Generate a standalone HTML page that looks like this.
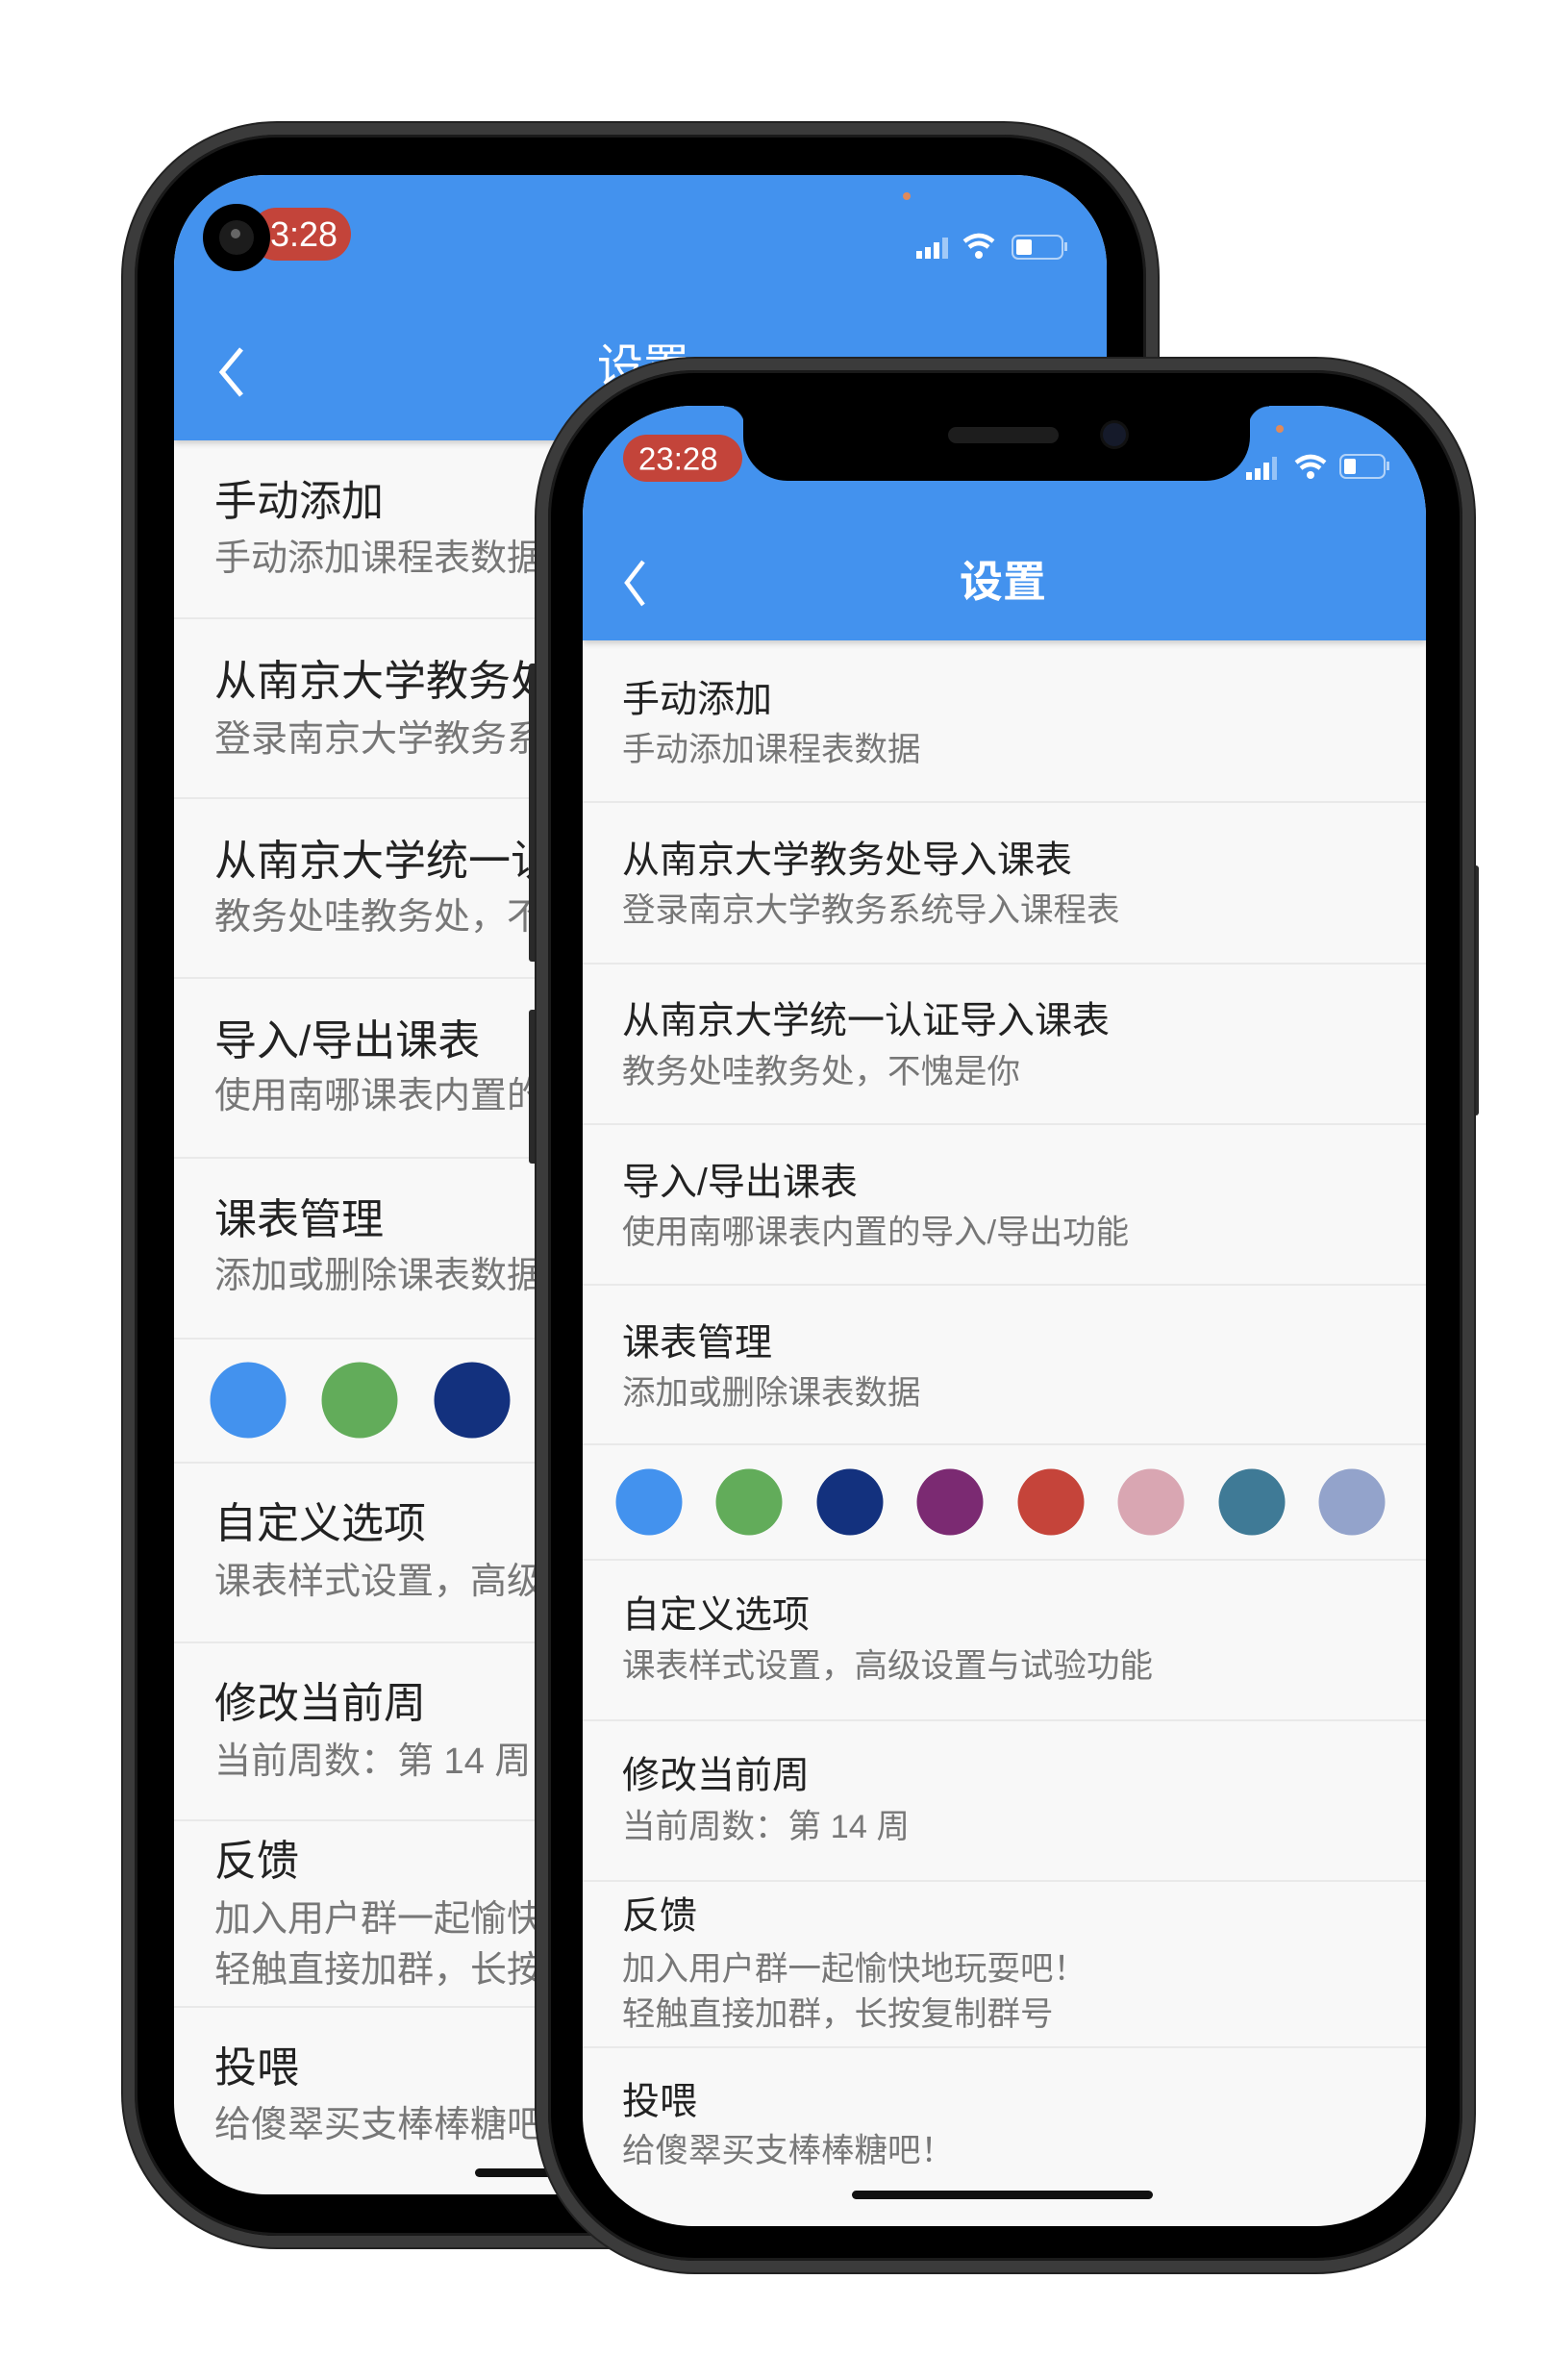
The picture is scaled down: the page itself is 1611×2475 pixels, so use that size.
<!DOCTYPE html>
<html><head><meta charset="utf-8"><style>
*{margin:0;padding:0;box-sizing:border-box}
body{width:1611px;height:2475px;background:#fff;position:relative;overflow:hidden;font-family:"Liberation Sans","Noto Sans CJK SC",sans-serif}
.abs{position:absolute}
.phone{position:absolute;background:#000;border:12px solid #3b3b3b;box-shadow:inset 0 0 0 3px #1a1a1a,0 0 0 2px #222}
.screen{position:absolute;background:#f8f8f8;overflow:hidden}
.hdr{position:absolute;left:0;top:0;width:100%;background:#4392ee;box-shadow:0 3px 6px rgba(0,0,0,.18)}
.t{position:absolute;white-space:nowrap;transform:translateY(-50%);line-height:1}
.sep{position:absolute;left:0;width:100%;height:2px;background:#e9e9e9}
.c{position:absolute;border-radius:50%;transform:translate(-50%,-50%)}
.ft{font-size:39px;color:#222}
.fs{font-size:34.5px;color:#777}
</style></head><body>

<!-- BACK PHONE -->
<div class="phone" style="left:128px;top:128px;width:1076px;height:2209px;border-radius:160px"></div>
<div class="screen" style="left:181px;top:182px;width:970px;height:2100px;border-radius:95px">
  <div class="hdr" style="height:276px"></div>
  <div class="abs" style="left:79px;top:34px;width:105px;height:55px;background:#c3443a;border-radius:28px"></div>
  <div class="t" style="left:100px;top:62px;font-size:36px;color:#fff">3:28</div>
  <div class="abs" style="left:30px;top:30px;width:70px;height:70px;border-radius:50%;background:#000"></div>
  <div class="abs" style="left:47px;top:47px;width:36px;height:36px;border-radius:50%;background:#1c1c1c"></div>
  <div class="abs" style="left:59px;top:56px;width:10px;height:10px;border-radius:50%;background:#666"></div>
  <div class="abs" style="left:758px;top:18px;width:8px;height:8px;border-radius:50%;background:#e08a5a"></div>
  <svg class="abs" style="left:770px;top:55px" width="170" height="40" viewBox="0 0 170 40">
    <rect x="2" y="24" width="6" height="8" fill="#fff"/><rect x="11" y="20" width="6" height="12" fill="#fff"/><rect x="20" y="15" width="6" height="17" fill="#fff"/><rect x="29" y="10" width="6" height="22" fill="#fff" opacity=".5"/>
    <path d="M52 14 Q67 2 82 14" stroke="#fff" stroke-width="4.5" fill="none"/><path d="M57 20 Q67 12 77 20" stroke="#fff" stroke-width="4.5" fill="none"/><circle cx="67" cy="28" r="4" fill="#fff"/>
    <rect x="102" y="8" width="52" height="24" rx="6" fill="none" stroke="#fff" stroke-width="2" opacity=".6"/><rect x="106" y="12" width="16" height="16" rx="2" fill="#fff"/><rect x="156" y="15" width="3" height="9" fill="#fff" opacity=".6"/>
  </svg>
  <svg class="abs" style="left:40px;top:175px" width="40" height="60" viewBox="0 0 40 60"><path d="M30 6 L10 30 L30 54" stroke="#fff" stroke-width="5" fill="none"/></svg>
  <div class="t" style="left:440px;top:200px;font-size:48px;color:#fff">设置</div>

  <div class="t" style="left:42px;top:340px;font-size:44px;color:#222">手动添加</div>
  <div class="t" style="left:42px;top:399px;font-size:38px;color:#777">手动添加课程表数据</div>
  <div class="sep" style="top:460px"></div>
  <div class="t" style="left:42px;top:527px;font-size:44px;color:#222">从南京大学教务处导入课表</div>
  <div class="t" style="left:42px;top:587px;font-size:38px;color:#777">登录南京大学教务系统导入课程表</div>
  <div class="sep" style="top:647px"></div>
  <div class="t" style="left:42px;top:714px;font-size:44px;color:#222">从南京大学统一认证导入课表</div>
  <div class="t" style="left:42px;top:772px;font-size:38px;color:#777">教务处哇教务处，不愧是你</div>
  <div class="sep" style="top:834px"></div>
  <div class="t" style="left:42px;top:901px;font-size:44px;color:#222">导入/导出课表</div>
  <div class="t" style="left:42px;top:958px;font-size:38px;color:#777">使用南哪课表内置的导入/导出功能</div>
  <div class="sep" style="top:1021px"></div>
  <div class="t" style="left:42px;top:1087px;font-size:44px;color:#222">课表管理</div>
  <div class="t" style="left:42px;top:1145px;font-size:38px;color:#777">添加或删除课表数据</div>
  <div class="sep" style="top:1209px"></div>
  <div class="c" style="left:77px;top:1274px;width:79px;height:79px;background:#4392ee"></div>
  <div class="c" style="left:193px;top:1274px;width:79px;height:79px;background:#62ac5a"></div>
  <div class="c" style="left:310px;top:1274px;width:79px;height:79px;background:#13317e"></div>
  <div class="sep" style="top:1338px"></div>
  <div class="t" style="left:42px;top:1403px;font-size:44px;color:#222">自定义选项</div>
  <div class="t" style="left:42px;top:1463px;font-size:38px;color:#777">课表样式设置，高级设置与试验功能</div>
  <div class="sep" style="top:1525px"></div>
  <div class="t" style="left:42px;top:1590px;font-size:44px;color:#222">修改当前周</div>
  <div class="t" style="left:42px;top:1650px;font-size:38px;color:#777">当前周数：第 14 周</div>
  <div class="sep" style="top:1710px"></div>
  <div class="t" style="left:42px;top:1754px;font-size:44px;color:#222">反馈</div>
  <div class="t" style="left:42px;top:1814px;font-size:38px;color:#777">加入用户群一起愉快地玩耍吧！</div>
  <div class="t" style="left:42px;top:1867px;font-size:38px;color:#777">轻触直接加群，长按复制群号</div>
  <div class="sep" style="top:1904px"></div>
  <div class="t" style="left:42px;top:1969px;font-size:44px;color:#222">投喂</div>
  <div class="t" style="left:42px;top:2028px;font-size:38px;color:#777">给傻翠买支棒棒糖吧！</div>
  <div class="abs" style="left:313px;top:2073px;width:330px;height:9px;border-radius:5px;background:#111"></div>
</div>

<!-- FRONT PHONE side buttons -->
<div class="abs" style="left:550px;top:690px;width:12px;height:310px;background:#2a2a2a;border-radius:3px"></div>
<div class="abs" style="left:550px;top:1050px;width:12px;height:160px;background:#2a2a2a;border-radius:3px"></div>
<div class="abs" style="left:1528px;top:900px;width:10px;height:260px;background:#2a2a2a;border-radius:3px"></div>

<!-- FRONT PHONE -->
<div class="phone" style="left:558px;top:373px;width:975px;height:1990px;border-radius:165px"></div>
<div class="screen" style="left:606px;top:422px;width:877px;height:1893px;border-radius:115px">
  <div class="hdr" style="height:244px"></div>
  <div class="abs" style="left:167px;top:0;width:527px;height:78px;background:#000;border-radius:0 0 46px 46px"></div>
  <div class="abs" style="left:147px;top:0;width:22px;height:22px;background:radial-gradient(circle at 0 100%,transparent 21px,#000 22px)"></div>
  <div class="abs" style="left:692px;top:0;width:22px;height:22px;background:radial-gradient(circle at 100% 100%,transparent 21px,#000 22px)"></div>
  <div class="abs" style="left:380px;top:22px;width:115px;height:17px;border-radius:9px;background:#1d1d1d"></div>
  <div class="abs" style="left:541px;top:18px;width:24px;height:24px;border-radius:50%;background:#151a2a;box-shadow:0 0 0 3px #111"></div>
  <div class="abs" style="left:721px;top:20px;width:8px;height:8px;border-radius:50%;background:#e08a5a"></div>
  <div class="abs" style="left:42px;top:30px;width:124px;height:49px;background:#c3443a;border-radius:25px"></div>
  <div class="t" style="left:58px;top:55px;font-size:33px;color:#fff">23:28</div>
  <svg class="abs" style="left:688px;top:45px" width="180" height="36" viewBox="0 0 180 36">
    <rect x="2" y="24" width="6" height="8" fill="#fff"/><rect x="11" y="20" width="6" height="12" fill="#fff"/><rect x="20" y="14" width="6" height="18" fill="#fff"/><rect x="29" y="8" width="5" height="24" fill="#fff" opacity=".45"/>
    <path d="M54 14 Q69 2 84 14" stroke="#fff" stroke-width="4.5" fill="none"/><path d="M59 20 Q69 12 79 20" stroke="#fff" stroke-width="4.5" fill="none"/><circle cx="69" cy="27" r="4" fill="#fff"/>
    <rect x="100" y="6" width="46" height="24" rx="6" fill="none" stroke="#fff" stroke-width="2" opacity=".6"/><rect x="104" y="10" width="12" height="16" rx="2" fill="#fff"/><rect x="148" y="13" width="3" height="9" fill="#fff" opacity=".6"/>
  </svg>
  <svg class="abs" style="left:37px;top:157px" width="36" height="56" viewBox="0 0 36 56"><path d="M26 5 L9 27 L26 50" stroke="#fff" stroke-width="4.5" fill="none"/></svg>
  <div class="t" style="left:392px;top:183px;font-size:45px;color:#fff;font-weight:bold">设置</div>

  <div class="t ft" style="left:41px;top:306px">手动添加</div>
  <div class="t fs" style="left:41px;top:358px">手动添加课程表数据</div>
  <div class="sep" style="top:411px"></div>
  <div class="t ft" style="left:41px;top:473px">从南京大学教务处导入课表</div>
  <div class="t fs" style="left:41px;top:525px">登录南京大学教务系统导入课程表</div>
  <div class="sep" style="top:579px"></div>
  <div class="t ft" style="left:41px;top:640px">从南京大学统一认证导入课表</div>
  <div class="t fs" style="left:41px;top:693px">教务处哇教务处，不愧是你</div>
  <div class="sep" style="top:746px"></div>
  <div class="t ft" style="left:41px;top:808px">导入/导出课表</div>
  <div class="t fs" style="left:41px;top:860px">使用南哪课表内置的导入/导出功能</div>
  <div class="sep" style="top:913px"></div>
  <div class="t ft" style="left:41px;top:975px">课表管理</div>
  <div class="t fs" style="left:41px;top:1027px">添加或删除课表数据</div>
  <div class="sep" style="top:1079px"></div>
  <div class="c" style="left:69px;top:1140px;width:69px;height:69px;background:#4392ee"></div>
  <div class="c" style="left:173px;top:1140px;width:69px;height:69px;background:#62ac5a"></div>
  <div class="c" style="left:278px;top:1140px;width:69px;height:69px;background:#13317e"></div>
  <div class="c" style="left:382px;top:1140px;width:69px;height:69px;background:#7b2a72"></div>
  <div class="c" style="left:487px;top:1140px;width:69px;height:69px;background:#c5443a"></div>
  <div class="c" style="left:591px;top:1140px;width:69px;height:69px;background:#d9a6b2"></div>
  <div class="c" style="left:696px;top:1140px;width:69px;height:69px;background:#3f7a96"></div>
  <div class="c" style="left:800px;top:1140px;width:69px;height:69px;background:#93a3cb"></div>
  <div class="sep" style="top:1199px"></div>
  <div class="t ft" style="left:41px;top:1258px">自定义选项</div>
  <div class="t fs" style="left:41px;top:1311px">课表样式设置，高级设置与试验功能</div>
  <div class="sep" style="top:1366px"></div>
  <div class="t ft" style="left:41px;top:1425px">修改当前周</div>
  <div class="t fs" style="left:41px;top:1478px">当前周数：第 14 周</div>
  <div class="sep" style="top:1533px"></div>
  <div class="t ft" style="left:41px;top:1571px">反馈</div>
  <div class="t fs" style="left:41px;top:1626px">加入用户群一起愉快地玩耍吧！</div>
  <div class="t fs" style="left:41px;top:1673px">轻触直接加群，长按复制群号</div>
  <div class="sep" style="top:1706px"></div>
  <div class="t ft" style="left:41px;top:1764px">投喂</div>
  <div class="t fs" style="left:41px;top:1815px">给傻翠买支棒棒糖吧！</div>
  <div class="abs" style="left:280px;top:1856px;width:313px;height:9px;border-radius:5px;background:#111"></div>
</div>
</body></html>
